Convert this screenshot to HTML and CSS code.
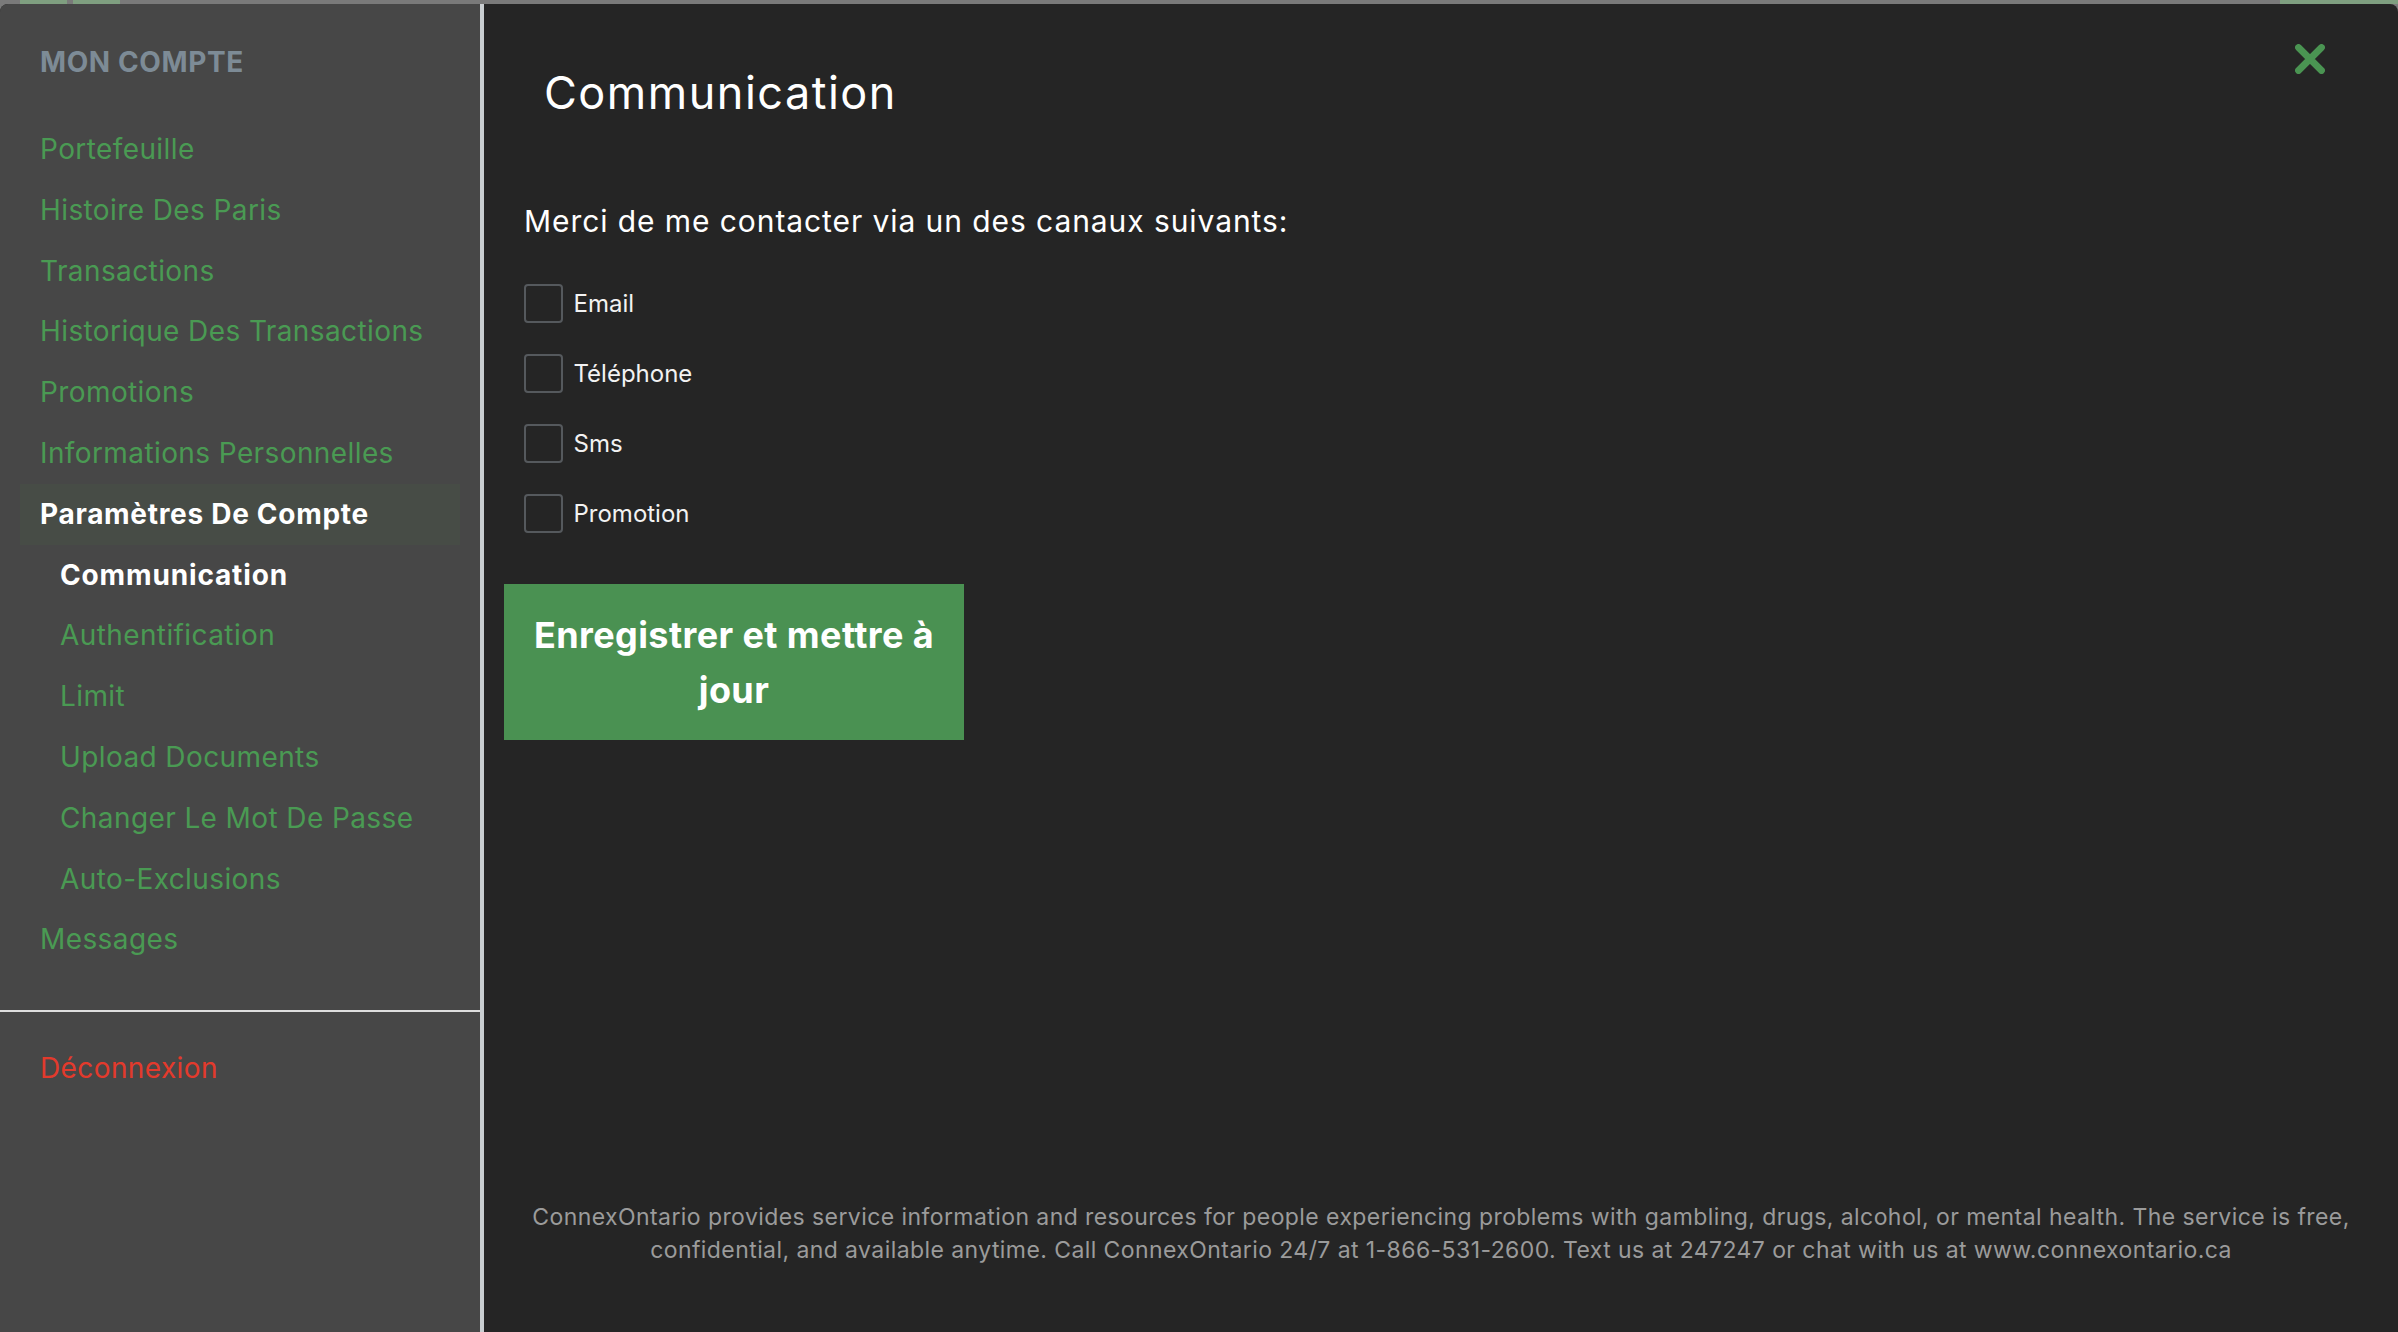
FILE: index.html
```html
<!DOCTYPE html>
<html lang="fr">
<head>
<meta charset="utf-8">
<title>Mon compte - Communication</title>
<link rel="stylesheet" href="styles.css">
</head>
<body>
<div class="backdrop-strip">
  <span class="chip chip-a"></span>
  <span class="chip chip-b"></span>
  <span class="strip-fill"></span>
  <span class="chip chip-c"></span>
</div>
<div class="modal">
  <aside class="sidebar">
    <div class="sidebar-title">MON COMPTE</div>
    <nav class="nav">
      <a class="nav-item">Portefeuille</a>
      <a class="nav-item">Histoire Des Paris</a>
      <a class="nav-item">Transactions</a>
      <a class="nav-item">Historique Des Transactions</a>
      <a class="nav-item">Promotions</a>
      <a class="nav-item">Informations Personnelles</a>
      <a class="nav-item nav-parent-active">Paramètres De Compte</a>
      <a class="nav-item nav-sub nav-current">Communication</a>
      <a class="nav-item nav-sub">Authentification</a>
      <a class="nav-item nav-sub">Limit</a>
      <a class="nav-item nav-sub">Upload Documents</a>
      <a class="nav-item nav-sub">Changer Le Mot De Passe</a>
      <a class="nav-item nav-sub">Auto-Exclusions</a>
      <a class="nav-item">Messages</a>
    </nav>
    <div class="sidebar-sep"></div>
    <a class="nav-item logout">Déconnexion</a>
  </aside>
  <main class="main">
    <button class="close-btn" aria-label="Fermer">
      <svg width="30" height="30" viewBox="0 0 30 30">
        <path d="M3.5 3.5 L26.5 26.5 M26.5 3.5 L3.5 26.5" stroke="#4a9452" stroke-width="6.8" stroke-linecap="round" fill="none"/>
      </svg>
    </button>
    <h1 class="page-title">Communication</h1>
    <div class="form">
      <p class="intro">Merci de me contacter via un des canaux suivants:</p>
      <div class="checks">
        <label class="check-row"><input type="checkbox" class="check"><span>Email</span></label>
        <label class="check-row"><input type="checkbox" class="check"><span>Téléphone</span></label>
        <label class="check-row"><input type="checkbox" class="check"><span>Sms</span></label>
        <label class="check-row"><input type="checkbox" class="check"><span>Promotion</span></label>
      </div>
    </div>
    <button class="save-btn">Enregistrer et mettre à jour</button>
    <p class="footer-note">ConnexOntario provides service information and resources for people experiencing problems with gambling, drugs, alcohol, or mental health. The service is free, confidential, and available anytime. Call ConnexOntario 24/7 at 1-866-531-2600. Text us at 247247 or chat with us at www.connexontario.ca</p>
  </main>
</div>
</body>
</html>
```

FILE: styles.css
```css
* { box-sizing: border-box; }

html, body {
  margin: 0;
  padding: 0;
  height: 100%;
}

body {
  background: #7a7a7a;
  font-family: "Inter", "Noto Sans", sans-serif;
  overflow: hidden;
  display: flex;
  flex-direction: column;
}

.backdrop-strip {
  height: 4px;
  display: flex;
  flex: none;
}

.chip {
  display: block;
  height: 4px;
  background: #7f9f80;
}

.chip-a { width: 47px; margin-left: 20px; }
.chip-b { width: 47px; margin-left: 6px; }
.strip-fill { flex: 1; }
.chip-c { width: 118px; }

.modal {
  flex: 1;
  display: flex;
  border-radius: 8px 8px 0 0;
  overflow: hidden;
  background: #252525;
}

.sidebar {
  width: 484px;
  flex: none;
  background: #474747;
  border-right: 4px solid #c9ced1;
  display: flex;
  flex-direction: column;
}

.sidebar-title {
  font-size: 28px;
  font-weight: 700;
  color: #7d8b96;
  line-height: 34px;
  padding-left: 40px;
  margin-top: 41px;
  letter-spacing: 0.6px;
}

.nav {
  display: flex;
  flex-direction: column;
  margin-top: 40px;
}

.nav-item {
  display: block;
  height: 60.8px;
  line-height: 60.8px;
  padding-left: 40px;
  font-size: 28px;
  letter-spacing: 0.4px;
  color: #4a9a53;
  text-decoration: none;
  white-space: nowrap;
}

.nav-sub { padding-left: 60px; }

.nav-parent-active {
  margin: 0 20px;
  padding-left: 20px;
  background: #474c46;
  color: #ffffff;
  font-weight: 700;
  letter-spacing: 0.7px;
}

.nav-current {
  color: #ffffff;
  font-weight: 700;
  letter-spacing: 0.85px;
}

.sidebar-sep {
  height: 2px;
  background: #dedede;
  margin-top: 40px;
  flex: none;
}

.logout {
  margin-top: 25.5px;
  color: #e33a2c;
}

.main {
  flex: 1;
  position: relative;
  display: flex;
  flex-direction: column;
  align-items: flex-start;
  padding: 0 20px;
  color: #ffffff;
}

.close-btn {
  position: absolute;
  top: 39.5px;
  right: 73px;
  width: 30px;
  height: 30px;
  padding: 0;
  border: 0;
  background: none;
  display: block;
}

.close-btn svg { display: block; }

.page-title {
  margin: 61.5px 0 0 40px;
  font-size: 45px;
  font-weight: 400;
  line-height: 54px;
  letter-spacing: 1.5px;
  color: #ffffff;
}

.form {
  margin-left: 20px;
  display: flex;
  flex-direction: column;
}

.intro {
  margin: 83.5px 0 0 0;
  font-size: 30px;
  line-height: 36px;
  letter-spacing: 0.92px;
  color: #ffffff;
}

.checks {
  display: flex;
  flex-direction: column;
  gap: 31px;
  margin-top: 45px;
}

.check-row {
  display: flex;
  align-items: center;
  gap: 10.5px;
  height: 39px;
  font-size: 24px;
  color: #f2f2f2;
}

.check {
  appearance: none;
  -webkit-appearance: none;
  width: 39px;
  height: 39px;
  margin: 0;
  border: 2px solid #55595d;
  border-radius: 4px;
  background: transparent;
  flex: none;
}

.save-btn {
  margin-top: 51px;
  width: 460px;
  height: 156px;
  background: #4a9152;
  border: 0;
  color: #ffffff;
  font-family: "Inter", "Noto Sans", sans-serif;
  font-size: 36px;
  font-weight: 700;
  line-height: 55px;
  letter-spacing: 0.4px;
  padding: 1px 20px 0 20px;
  text-align: center;
}

.footer-note {
  margin: auto 0 65px 0;
  align-self: stretch;
  text-align: center;
  font-size: 23px;
  line-height: 33px;
  letter-spacing: 0.42px;
  color: #9b9b9b;
}
```
